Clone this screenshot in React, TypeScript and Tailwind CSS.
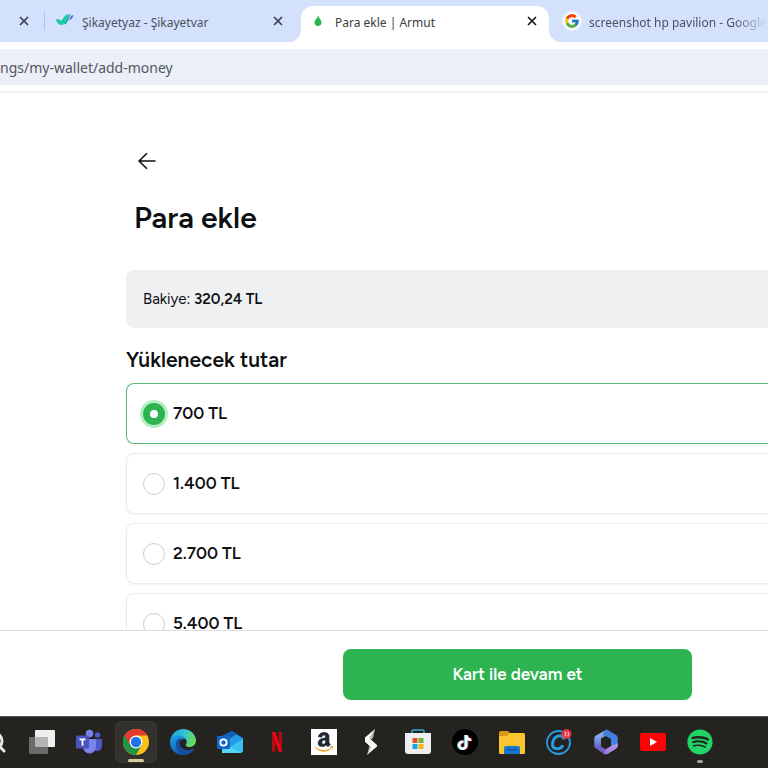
import type { ReactNode } from "react";
import { Search, X } from "lucide-react";
import { FaAmazon, FaSpotify, FaTiktok } from "react-icons/fa";
import { FcGoogle } from "react-icons/fc";

const amounts = ["700 TL", "1.400 TL", "2.700 TL", "5.400 TL"];

function CloseButton({ label, active = false }: { label: string; active?: boolean }) {
  return (
    <button
      type="button"
      aria-label={label}
      className={
        active
          ? "flex w-4 shrink-0 justify-center text-[#1f1f1f]"
          : "flex w-4 shrink-0 justify-center text-[#3c4350]"
      }
    >
      <X className="h-[14px] w-[14px]" strokeWidth={3} aria-hidden="true" />
    </button>
  );
}

function TabStrip() {
  return (
    <div className="flex h-[42px] bg-white text-[12px] text-[#4b5160]">
      <div className="flex w-[301px] shrink-0 items-center rounded-br-xl bg-[#d3e1fc] pr-[15px] pl-4">
        <CloseButton label="Sekmeyi kapat" />
        <span className="ml-3 h-[18px] w-px bg-[#a8c4f1]" />
        <svg viewBox="0 0 18 14" className="ml-[11px] h-[14px] w-[18px]" aria-hidden="true">
          <path d="M0 5.500c2.200-.4 4 .1 5.200 1.600L8.800 2C9.700.8 10.900.2 12.600.2L7.600 9.500c-1 1.600-3 1.900-4.600.8C1.500 9.200.6 7.500 0 5.500z" fill="#1ac8a0" />
          <path d="M7.500 9.700 12 2C12.600.8 13.500.3 14.700.3L11.700 7.600c-.8 2-2.500 3-4.600 2.900z" fill="#12b5a6" />
          <path d="M13 6.500 15 2.200C15.500 1.300 16.400 1 17.500 1.200c-.6 2.300-2.200 4.300-4.500 5.300z" fill="#6a55e8" />
        </svg>
        <span className="ml-2 flex-1 truncate pt-[3px]">Şikayetyaz - Şikayetvar</span>
        <CloseButton label="Şikayetyaz sekmesini kapat" />
      </div>
      <div className="w-[248px] shrink-0 bg-[#d3e1fc] pt-[6px]">
        <div className="flex h-full items-center rounded-t-xl bg-white pr-[9px] pb-[6px] pl-3 text-[#3a3d42]">
          <svg viewBox="0 0 10 12" className="h-3 w-[10px]" aria-hidden="true">
            <path d="M5.400.5C5.500 3 8.500 4.700 8.500 7.600 8.500 9.800 7 11 5 11S1.500 9.800 1.500 7.600C1.500 5 4.600 3.500 5 .5z" fill="#2db34f" />
          </svg>
          <span className="ml-3 flex-1 truncate pt-[3px]">Para ekle | Armut</span>
          <CloseButton label="Para ekle sekmesini kapat" active />
        </div>
      </div>
      <div className="flex min-w-0 flex-1 items-center rounded-bl-xl bg-[#d3e1fc] pl-[13px]">
        <span className="flex h-5 w-5 shrink-0 items-center justify-center rounded-full bg-[#f1f5fe]">
          <FcGoogle className="h-4 w-4" aria-hidden="true" />
        </span>
        <span className="ml-[7px] flex-1 overflow-hidden pt-[3px] whitespace-nowrap [mask-image:linear-gradient(to_right,black_80%,transparent)]">
          screenshot hp pavilion - Google
        </span>
      </div>
    </div>
  );
}

function AddressBar() {
  return (
    <div className="border-b-2 border-[#edf1f6] bg-white pt-[7px] pb-[6px]">
      <label htmlFor="address" className="sr-only">
        Adres
      </label>
      <input
        id="address"
        defaultValue="ngs/my-wallet/add-money"
        className="block h-9 w-full bg-[#ebeff8] text-[14px] text-[#53575e] outline-none"
      />
    </div>
  );
}

function TaskButton({
  label,
  active = false,
  children
}: {
  label: string;
  active?: boolean;
  children: ReactNode;
}) {
  return (
    <div className="flex w-[47px] shrink-0 justify-center">
      <button
        type="button"
        aria-label={label}
        className={
          active
            ? "relative flex h-[42px] w-[42px] items-center justify-center rounded-md border border-[#3b3935] bg-[#32312d]"
            : "relative flex h-[42px] w-[42px] items-center justify-center"
        }
      >
        {children}
      </button>
    </div>
  );
}

function TaskViewIcon() {
  return (
    <svg viewBox="0 0 26 26" className="h-[26px] w-[26px]" aria-hidden="true">
      <rect y="8" width="19" height="17" rx="1" fill="#6c6b69" />
      <rect x="6" y="1" width="20" height="17" rx="1" fill="#eeeeee" />
      <rect x="6" y="8" width="13" height="10" fill="#b5b5b4" />
    </svg>
  );
}

function TeamsIcon() {
  return (
    <svg viewBox="0 0 26 26" className="h-[26px] w-[26px]" aria-hidden="true">
      <circle cx="21.500" cy="6" r="2.700" fill="#5059c9" />
      <circle cx="13.500" cy="4.500" r="3.800" fill="#7b83eb" />
      <path d="M17 10h8a1 1 0 0 1 1 1v6a5 5 0 0 1-8 4z" fill="#5059c9" />
      <path d="M8 10h12v8a6.500 6.500 0 0 1-13 0z" fill="#7b83eb" />
      <rect y="6.500" width="13" height="13" rx="1" fill="#4b53bc" />
      <path d="M3.500 10.400h6M6.500 10v6.800" fill="none" stroke="#fff" strokeWidth="1.800" />
    </svg>
  );
}

function ChromeIcon() {
  return (
    <svg viewBox="0 0 48 48" className="h-[26px] w-[26px]" aria-hidden="true">
      <circle cx="24" cy="24" r="24" fill="#fbc116" />
      <path d="M3.200 12A24 24 0 0 0 24 48l10.400-18L24 24z" fill="#229342" />
      <path d="M3.200 12 13.600 30 24 12h20.800A24 24 0 0 0 3.200 12z" fill="#e33b2e" />
      <circle cx="24" cy="24" r="12" fill="#fff" />
      <circle cx="24" cy="24" r="9.500" fill="#1a73e8" />
    </svg>
  );
}

function EdgeIcon() {
  return (
    <svg viewBox="0 0 26 26" className="h-[26px] w-[26px]" aria-hidden="true">
      <defs>
        <linearGradient id="edgeTop" x1="0" y1="0.300" x2="1" y2="0.600">
          <stop offset="0" stopColor="#1c9de0" />
          <stop offset="0.500" stopColor="#35c4d5" />
          <stop offset="1" stopColor="#6ade4c" />
        </linearGradient>
        <linearGradient id="edgeBody" x1="0" y1="0" x2="0.400" y2="1">
          <stop offset="0" stopColor="#1aa2e6" />
          <stop offset="1" stopColor="#0e5ab0" />
        </linearGradient>
      </defs>
      <path d="M.2 12A13 13 0 0 1 13 0c7.500 0 13 5.500 13 11.500 0 4-3 6.500-6.500 6.500-3 0-4.500-1.200-3.500-2.700 2-3-.2-6.800-4.500-6.800C7 8.500 2 10 .2 12z" fill="url(#edgeTop)" />
      <path d="M0 13C.5 9 4 6.500 8.500 6.500c3.500 0 6.200 1.500 7.300 3.800-5-1-7.300 2.400-6.300 5.700 1.300 4.200 7 6.700 14.500 4C21.500 24 17.500 26 13 26 5 26-.2 20 0 13z" fill="url(#edgeBody)" />
      <path d="M8 10c-4 4-2.500 14 6 16 4-.2 8-2.500 10-6-7.500 2.700-13.500.2-14.500-4-.6-2.400.3-4.600 2.300-5.500C10.500 9.600 9 9.500 8 10z" fill="#164d9d" />
    </svg>
  );
}

function OutlookIcon() {
  return (
    <svg viewBox="0 0 26 26" className="h-[26px] w-[26px]" aria-hidden="true">
      <path d="M5 8 15 2l11 7v12a3 3 0 0 1-3 3H5z" fill="#1687d9" />
      <path d="M5 6.500 15 2l6 4L9 16l-4-2z" fill="#0f5fba" />
      <path d="m26 9-18 12.500V24h15a3 3 0 0 0 3-3z" fill="#37c2f1" />
      <path d="m19 5.500 7 4.500-15 9-6-4z" fill="#249ae3" />
      <path d="m5 14 19 9.500c-.4.400-.8.500-1.500.5H5z" fill="#55d7f4" />
      <rect y="7" width="13" height="13" rx="1" fill="#1267c3" />
      <circle cx="6.500" cy="13.500" r="3.200" fill="none" stroke="#fff" strokeWidth="1.800" />
    </svg>
  );
}

function NetflixIcon() {
  return (
    <svg viewBox="0 0 12 20" className="h-5 w-3" aria-hidden="true">
      <path d="M1 0h3.500v19.500L1 20zM7.800 0H11v20l-3.200-.5z" fill="#b50a14" />
      <path d="M1 0h3.500L11 20l-3.400-.5z" fill="#e50914" />
    </svg>
  );
}

function AmazonIcon() {
  return (
    <span className="grid h-[26px] w-[26px] place-items-center bg-white">
      <FaAmazon
        className="col-start-1 row-start-1 h-[22px] w-[20px] stroke-[#202833] stroke-[14px] text-[#202833] [clip-path:inset(0_0_28%_0)]"
        aria-hidden="true"
      />
      <FaAmazon
        className="col-start-1 row-start-1 h-[22px] w-[20px] text-[#f49b20] [clip-path:inset(72%_0_0_0)]"
        aria-hidden="true"
      />
    </span>
  );
}

function BoltIcon() {
  return (
    <svg viewBox="0 0 14 26" className="h-[26px] w-[14px]" aria-hidden="true">
      <path d="M11 0 1 8.500v4.200L7 18l3.500-3.500L6 9.500z" fill="#fff" />
      <path d="m5 9 8 7v1.500L3 26l3.500-8L1 12z" fill="#f7f7f5" />
      <path d="M11 0 9 9l-2 1.500L5.500 8.500zM3 26l2.500-9.500L7 18z" fill="#b5b4b1" />
    </svg>
  );
}

function StoreIcon() {
  return (
    <svg viewBox="0 0 26 26" className="h-[26px] w-[26px]" aria-hidden="true">
      <path d="M7 6V2.200A1.200 1.200 0 0 1 8.200 1h9.600A1.200 1.200 0 0 1 19 2.200V6" fill="none" stroke="#3aa6d3" strokeWidth="1.600" />
      <path d="M0 4h26v18a3 3 0 0 1-3 3H3a3 3 0 0 1-3-3z" fill="#eeeef0" />
      <path d="M7.500 9h5v5h-5z" fill="#e84d29" />
      <path d="M13.500 9h5v5h-5z" fill="#72b42c" />
      <path d="M7.500 15h5v5h-5z" fill="#1ba0e5" />
      <path d="M13.500 15h5v5h-5z" fill="#f8b616" />
    </svg>
  );
}

function FolderIcon() {
  return (
    <svg viewBox="0 0 26 26" className="h-[26px] w-[26px]" aria-hidden="true">
      <path d="M0 3.500A1.500 1.500 0 0 1 1.500 2H9l2 2v4H0z" fill="#d99713" />
      <path d="M0 7h8l3-3h13.500A1.500 1.500 0 0 1 26 5.500v18a1.500 1.500 0 0 1-1.500 1.500h-23A1.500 1.500 0 0 1 0 23.500z" fill="#fbc62f" />
      <path d="M5 25v-6a2 2 0 0 1 2-2h12a2 2 0 0 1 2 2v6z" fill="#1977cf" />
      <path d="M8 20h10v1.500H8z" fill="#0c55a0" />
    </svg>
  );
}

function CCleanerIcon() {
  return (
    <svg viewBox="0 0 26 26" className="h-[26px] w-[26px]" aria-hidden="true">
      <circle cx="12.500" cy="13.500" r="11.500" fill="none" stroke="#279ce5" strokeWidth="1.800" />
      <path d="M18 10.500c0-2.500-1.600-3.700-4-3.700-4.500 0-7.500 4-7.500 8 0 3 1.800 5 4.700 5 2.500 0 4.500-1.200 5.800-3.600" fill="none" stroke="#279ce5" strokeWidth="3" />
      <circle cx="20.500" cy="5" r="5" fill="#e42d3d" />
      <path d="M18.300 3.200h1.500V5h-1m1 0v1.900h-1.600m3-3.700h1.500V5h-1m1 0v1.900h-1.600" fill="none" stroke="#fff" strokeWidth=".7" />
    </svg>
  );
}

function OfficeIcon() {
  return (
    <svg viewBox="0 0 26 26" className="h-[26px] w-[26px]" aria-hidden="true">
      <defs>
        <linearGradient id="officeLeft" x1="0" y1="0" x2="0" y2="1">
          <stop offset="0" stopColor="#a3bff0" />
          <stop offset="1" stopColor="#4a63cf" />
        </linearGradient>
        <linearGradient id="officeBottom" x1="0" y1="0" x2="1" y2="0">
          <stop offset="0" stopColor="#8a6cd8" />
          <stop offset="1" stopColor="#b795e6" />
        </linearGradient>
      </defs>
      <path d="M13 1 3 6.500A3 3 0 0 0 1.300 9v9L8 21V9.500L15.500 5V2z" fill="url(#officeLeft)" />
      <path d="m12 1 2-.5L23 6a3 3 0 0 1 1.700 2.700V18L18 17V10L9.500 5.500z" fill="#4480e2" />
      <path d="m24.700 14-6.700 3-5.500 3.200L1.300 18l9.700 6.700a4 4 0 0 0 4 0l8-5a3 3 0 0 0 1.700-2.700z" fill="url(#officeBottom)" />
      <path d="M1.300 17v1L11 24.700l2-4.500L8 17.500z" fill="#6f5cc4" />
      <path d="m13 7.500 5 3v6L13 19.500l-5-3V10.500z" fill="#24231f" />
    </svg>
  );
}

function Taskbar() {
  return (
    <nav
      aria-label="Görev çubuğu"
      className="flex h-[52px] shrink-0 items-center overflow-hidden border-t border-[#56534e] bg-[#24231f] pb-px"
    >
      <button type="button" aria-label="Ara" className="flex w-[18px] shrink-0 justify-end pr-[11px] text-[#e8e8e6]">
        <Search className="h-6 w-6 shrink-0" strokeWidth={3} aria-hidden="true" />
      </button>
      <TaskButton label="Görev görünümü">
        <TaskViewIcon />
      </TaskButton>
      <TaskButton label="Teams">
        <TeamsIcon />
      </TaskButton>
      <TaskButton label="Chrome" active>
        <ChromeIcon />
        <span className="absolute bottom-0 h-[3px] w-4 rounded-full bg-[#d4cd9b]" />
      </TaskButton>
      <TaskButton label="Edge">
        <EdgeIcon />
      </TaskButton>
      <TaskButton label="Outlook">
        <OutlookIcon />
      </TaskButton>
      <TaskButton label="Netflix">
        <NetflixIcon />
      </TaskButton>
      <TaskButton label="Amazon">
        <AmazonIcon />
      </TaskButton>
      <TaskButton label="Sistem">
        <BoltIcon />
      </TaskButton>
      <TaskButton label="Microsoft Store">
        <StoreIcon />
      </TaskButton>
      <TaskButton label="TikTok">
        <span className="flex h-[26px] w-[26px] items-center justify-center rounded-full bg-black">
          <FaTiktok
            className="h-[15px] w-[15px] text-white [filter:drop-shadow(-1px_0_0_#25d9d3)_drop-shadow(1px_0_0_#e3365a)]"
            aria-hidden="true"
          />
        </span>
      </TaskButton>
      <TaskButton label="Dosya Gezgini">
        <FolderIcon />
      </TaskButton>
      <TaskButton label="CCleaner">
        <CCleanerIcon />
      </TaskButton>
      <TaskButton label="Microsoft 365">
        <OfficeIcon />
      </TaskButton>
      <TaskButton label="YouTube">
        <svg viewBox="0 0 26 18" className="h-[18px] w-[26px]" aria-hidden="true">
          <rect width="26" height="18" rx="2" fill="#fa0505" />
          <path d="m10 5 7 4-7 4z" fill="#fff" />
        </svg>
      </TaskButton>
      <TaskButton label="Spotify">
        <FaSpotify className="h-[26px] w-[26px] text-[#20d565]" aria-hidden="true" />
        <span className="absolute bottom-0 h-[3px] w-[6px] rounded-full bg-[#a3a29f]" />
      </TaskButton>
    </nav>
  );
}

export default function App() {
  return (
    <div className="flex h-screen flex-col overflow-hidden bg-white font-['Noto_Sans',sans-serif]">
      <TabStrip />
      <AddressBar />
      <main className="min-h-0 flex-1 overflow-hidden pl-[126px] font-['Figtree','Inter',sans-serif] text-[#0e0f10]">
        <button type="button" aria-label="Geri" className="mt-14 ml-[9px] flex h-6 w-6 items-center justify-center">
          <svg viewBox="0 0 18 18" className="h-[18px] w-[18px]" aria-hidden="true">
            <path
              d="M17.500 9H1M9 1.200 1 9l8 7.800"
              fill="none"
              stroke="currentColor"
              strokeWidth="1.600"
              strokeLinejoin="round"
            />
          </svg>
        </button>
        <h1 className="mt-[25px] ml-2 text-[30px] leading-10 font-semibold">Para ekle</h1>
        <p className="mt-8 flex h-[58px] items-center rounded-l-lg bg-[#eff0f2] pl-[17px] text-[15px]">
          <span>
            Bakiye: <strong className="font-semibold">320,24 TL</strong>
          </span>
        </p>
        <fieldset className="mt-[18px]">
          <legend className="mb-[9px] text-[21px] leading-7 font-semibold">Yüklenecek tutar</legend>
          <div className="flex flex-col gap-[9px]">
            {amounts.map((amount, index) => (
              <label
                key={amount}
                className="flex h-[61px] items-center gap-2 rounded-l-lg border border-r-0 border-[#ececee] pl-4 text-[17px] font-semibold shadow-xs has-checked:border-[#5dbd78]"
              >
                <input
                  type="radio"
                  name="amount"
                  defaultChecked={index === 0}
                  className="h-[22px] w-[22px] appearance-none rounded-full border border-[#cfcfd2] bg-white checked:border-[7px] checked:border-[#2db34f] checked:ring-[3px] checked:ring-[#b5efc1]"
                />
                {amount}
              </label>
            ))}
          </div>
        </fieldset>
      </main>
      <footer className="shrink-0 border-t border-[#dcdde0] bg-white pt-[18px] pb-4 pl-[343px] font-['Figtree','Inter',sans-serif]">
        <button
          type="button"
          className="block h-[51px] w-[349px] rounded-lg bg-[#2db34f] text-[17px] font-semibold text-white"
        >
          Kart ile devam et
        </button>
      </footer>
      <Taskbar />
    </div>
  );
}
